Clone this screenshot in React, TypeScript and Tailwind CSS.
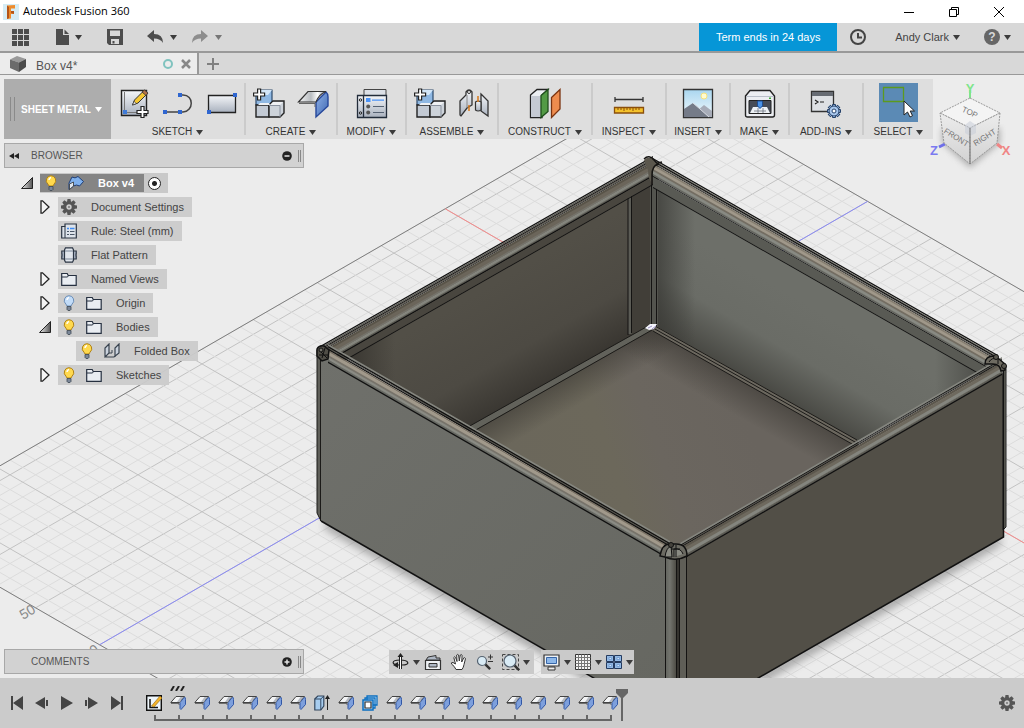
import { ReactNode } from "react";

type IconProps = { className?: string };

const Caret = ({ className = "fill-[#3c3c3c]" }: IconProps) => (
  <svg viewBox="0 0 7 5" className={`h-[5px] w-[7px] shrink-0 ${className}`} aria-hidden="true">
    <path d="M0 0h7L3.5 5z" />
  </svg>
);

const Svg = ({ children, box = 32, className = "size-8" }: { children: ReactNode; box?: number; className?: string }) => (
  <svg viewBox={`0 0 ${box} ${box}`} className={`shrink-0 ${className}`} fill="none" aria-hidden="true">
    {children}
  </svg>
);

const Gradients = () => (
  <svg className="absolute size-0" aria-hidden="true">
    <defs>
      <linearGradient id="steel" x1="0" y1="0" x2="0" y2="1">
        <stop offset="0" stopColor="#f4f6f9" />
        <stop offset="1" stopColor="#a9b1be" />
      </linearGradient>
      <linearGradient id="sky" x1="0" y1="0" x2="0" y2="1">
        <stop offset="0" stopColor="#a9d6ef" />
        <stop offset="1" stopColor="#f3fafd" />
      </linearGradient>
      <linearGradient id="fold" x1="0" y1="0" x2="1" y2="0">
        <stop offset="0" stopColor="#f5f5f5" />
        <stop offset=".45" stopColor="#b9bdc1" />
        <stop offset=".7" stopColor="#fff" />
        <stop offset="1" stopColor="#8b94a4" />
      </linearGradient>
      <linearGradient id="foldBlue" x1="0" y1="0" x2="1" y2="1">
        <stop offset="0" stopColor="#8fb2e8" />
        <stop offset="1" stopColor="#4068b2" />
      </linearGradient>
      <linearGradient id="tri" x1="0" y1="0" x2="1" y2="0">
        <stop offset="0" stopColor="#eee" />
        <stop offset="1" stopColor="#555" />
      </linearGradient>
    </defs>
  </svg>
);

/* ---------- ribbon icons ---------- */

const Plus3d = ({ x, y }: { x: number; y: number }) => (
  <path
    transform={`translate(${x} ${y})`}
    d="M4 0h3v4h4v3H7v4H4V7H0V4h4z"
    fill="#fff"
    stroke="#222"
    strokeWidth="1.2"
  />
);

const CreateSketchIcon = () => (
  <Svg>
    <path d="M3.5 3.5h25v25h-25z" fill="url(#steel)" stroke="#222" strokeWidth="1.4" />
    <path d="M6.5 5v20.5H20" stroke="#777" />
    <path d="M5 23h4v4H5z" fill="#3f7bd8" />
    <path d="M14.5 18l2-5L26 3.5l3.5 3-9.5 9.5z" fill="#f6c834" stroke="#333" />
    <path d="M24 5l2.5-2 3.5 3-2 2.5z" fill="#b2724a" stroke="#333" strokeWidth=".8" />
    <path d="M14.5 18l1.6-3.6 2.2 2.2z" fill="#fff" stroke="#333" strokeWidth=".7" />
    <Plus3d x={19} y={19.5} />
  </Svg>
);

const LineIcon = () => (
  <Svg>
    <path d="M3 25h18c11-1 11-17 0-17h-3" stroke="#444" strokeWidth="1.5" />
    <path d="M1 23h4v4H1zM16 23h4v4h-4zM16 6h4v4h-4z" fill="#2f66d0" />
  </Svg>
);

const RectangleIcon = () => (
  <Svg>
    <path d="M2.5 8.5h27v17h-27z" fill="url(#steel)" stroke="#222" strokeWidth="1.3" />
    <path d="M27 6h4v4h-4zM1 23h4v4H1z" fill="#2f66d0" />
  </Svg>
);

const NewComponentIcon = () => (
  <Svg>
    <path d="M3 8l4-5h12v12l-3 3H3z" fill="#8fb8e3" stroke="#2e4a6b" strokeWidth="1.2" />
    <path d="M7 3h12l-4 5H5z" fill="#d3e6f8" />
    <path d="M3 18h13v12H3z" fill="#c3cad4" stroke="#222" strokeWidth="1.4" />
    <path d="M16 18l4-4h11v12l-4 4H16z" fill="#cdd3da" stroke="#222" strokeWidth="1.4" />
    <path d="M17 18h10l3-3H20zM5 18l2-2h9l1 2z" fill="#eff1f4" />
    <path d="M16 18.5h11V30" stroke="#8b93a0" />
    <Plus3d x={0.6} y={2} />
  </Svg>
);

const FlangeIcon = () => (
  <Svg>
    <path d="M19 15L29 5q2 1.500 2 5v9L19 30z" fill="url(#foldBlue)" stroke="#26479a" strokeWidth="1.4" />
    <path d="M1.5 15L11 4.500h18q-7 2.500-10 10.500z" fill="url(#fold)" stroke="#333" strokeWidth="1.2" />
    <path d="M2 16.500h16V20" stroke="#666" />
  </Svg>
);

const ModifyIcon = () => (
  <Svg>
    <path d="M8 2.500h22V10H8z" fill="#dce0e6" stroke="#444" />
    <path d="M1.5 8.500h6v22h-6zM7.500 8.500h23v22h-23z" fill="url(#steel)" stroke="#222c3a" strokeWidth="1.3" />
    <circle cx="4.5" cy="13" r="1.2" stroke="#222" />
    <circle cx="4.5" cy="26" r="1.2" stroke="#222" />
    <path d="M10 11h4.500v4H10zM16 12.500h12v1.200H16z" fill="#4b93f7" />
    <circle cx="12.2" cy="19.5" r="2" fill="#555" />
    <circle cx="12.2" cy="25.5" r="2" fill="#555" />
    <path d="M17 19.500h11M17 25.500h11" stroke="#566273" strokeWidth="1.2" />
  </Svg>
);

const JointIcon = () => (
  <Svg>
    <path d="M2 14l6-6V5q3-4 6 0v13l-5 3-6 8q-1-.5-1-1.500z" fill="url(#steel)" stroke="#333" strokeWidth="1.3" />
    <path d="M9 8v13" stroke="#888" />
    <circle cx="11" cy="5" r="1.5" fill="#fff" stroke="#333" />
    <path d="M23 7l7 7v15l-7-5z" fill="url(#steel)" stroke="#333" strokeWidth="1.3" />
    <path d="M17.500 15q2.500-2 5.500 0v8q-3 2-5.500 0z" fill="url(#steel)" stroke="#333" strokeWidth="1.2" />
    <path d="M11 18v6M20 9v6" stroke="#d87a1d" strokeWidth="1.5" />
  </Svg>
);

const ConstructIcon = () => (
  <Svg>
    <path d="M1.5 8L8 2.500h11L13 8v22.500H1.5z" fill="#eceff3" stroke="#222" strokeWidth="1.3" />
    <path d="M2 9h10v21H2z" fill="#c5cad3" />
    <path d="M12 8.500l7-6v22l-7 6z" fill="#529a45" stroke="#1f4f1c" strokeWidth="1.3" />
    <path d="M22.500 10.500l8.500-8V22l-8.500 8.500z" fill="#ee8c4e" stroke="#7b3410" strokeWidth="1.3" />
  </Svg>
);

const InspectIcon = () => (
  <Svg>
    <path d="M2 10v5M30 10v5M2 12.500h28" stroke="#333" strokeWidth="1.3" />
    <path d="M1.500 20.500h29V26h-29z" fill="#f4c22c" stroke="#8b4f0c" strokeWidth="1.3" />
    <path d="M5 21v2M8 21v2M11 21v3M14 21v2M17 21v2M20 21v3M23 21v2M26 21v2" stroke="#8b4f0c" />
  </Svg>
);

const InsertIcon = () => (
  <Svg>
    <path d="M1.500 2.500h29v28h-29z" fill="url(#sky)" stroke="#333" strokeWidth="1.3" />
    <circle cx="22" cy="9" r="3" fill="#fffbd0" stroke="#f6e27a" />
    <path d="M15 24l7-6 8 6v6H15z" fill="#a7acb8" />
    <path d="M2 22l9-6 7 6 9 8H2z" fill="#757b88" />
    <path d="M11 16l7 6 9 8" stroke="#d8dbe2" />
  </Svg>
);

const MakeIcon = () => (
  <Svg>
    <path d="M1.500 9L6 3.500h20L30.500 9v19q0 2-2 2h-25q-2 0-2-2z" fill="#eceef2" stroke="#222" strokeWidth="1.4" />
    <path d="M2 9.500h28" stroke="#b9bfc9" />
    <path d="M5 13.500h22v13H5z" fill="#464c57" stroke="#222" />
    <path d="M9 20h14l3 6H6z" fill="#eef2f6" />
    <path d="M13.500 14h5v5L16 21.500 13.500 19z" fill="#4b93e7" stroke="#1f4e91" />
    <path d="M10 24h12M14 21v5M19 21v5" stroke="#6b727e" strokeWidth=".8" />
    <path d="M25 10.500h2V12h-2z" fill="#3aaa35" />
  </Svg>
);

const gearTeeth = [0, 45, 90, 135, 180, 225, 270, 315];

const AddInsIcon = () => (
  <Svg>
    <path d="M1.500 4.500h22v20h-22z" fill="#dde0e4" stroke="#333" strokeWidth="1.3" />
    <path d="M2 5h21v4H2z" fill="#666b73" />
    <path d="M5 13l3 2-3 2M10 15h4" stroke="#222" strokeWidth="1.2" />
    <g fill="#a9c8ee" stroke="#27436b">
      {gearTeeth.map((a) => (
        <path key={a} d="M22.500 17.500h3v3h-3z" transform={`rotate(${a} 24 24)`} />
      ))}
      <circle cx="24" cy="24" r="5" />
      <circle cx="24" cy="24" r="2" fill="#fff" />
    </g>
  </Svg>
);

const SelectIcon = () => (
  <Svg className="size-[39px]" box={39}>
    <path d="M4.500 4.500h20v14h-20z" stroke="#5c9a1e" strokeWidth="1.3" />
    <path d="M25 18v14l3.500-3 2.500 5 2.500-1.300-2.300-4.700h4.300z" fill="#fff" stroke="#222" />
  </Svg>
);

/* ---------- browser icons ---------- */

const Bulb = ({ off = false }: { off?: boolean }) => (
  <Svg box={16} className="size-4">
    <path
      d="M8 .7a4.800 4.800 0 0 1 3 8.500L10 11H6L5 9.200A4.800 4.800 0 0 1 8 .7z"
      fill={off ? "#c2dcf8" : "#ffd94e"}
      stroke={off ? "#6d8fb8" : "#b08318"}
    />
    <path d="M6 5q0-2 2-2.500" stroke="#fff" strokeWidth="1.5" />
    <path d="M6 11.500h4v3l-1 1H7l-1-1z" fill="#7b8798" stroke="#3e4753" strokeWidth=".8" />
  </Svg>
);

const Folder = () => (
  <Svg box={16} className="size-4">
    <path d="M.7 14.300V2.500h5.500l1 2h8v9.800z" fill="#e9edf2" stroke="#263040" strokeWidth="1.2" />
    <path d="M1 6h5.500l1-1.500" stroke="#263040" />
  </Svg>
);

const Gear = ({ className = "size-4" }: IconProps) => (
  <Svg box={16} className={className}>
    {gearTeeth.map((a) => (
      <path key={a} d="M6.500 0h3l.5 3H6z" fill="#555" transform={`rotate(${a} 8 8)`} />
    ))}
    <circle cx="8" cy="8" r="4.2" stroke="#555" strokeWidth="3" />
    <circle cx="8" cy="8" r="1" fill="#777" />
  </Svg>
);

const RuleIcon = () => (
  <Svg box={16} className="size-4">
    <path d="M4 1h11.300v14H.7V3.500H4z" fill="#dde3ea" stroke="#2b3543" strokeWidth="1.2" />
    <path d="M4 3.500V15" stroke="#2b3543" />
    <path d="M6 5.500h2M9 5.500h4.500" stroke="#3f8cf4" strokeWidth="1.4" />
    <path d="M6 8.500h2M9 8.500h4.500M6 11.500h2M9 11.500h4.500" stroke="#4a5666" strokeWidth="1.2" />
  </Svg>
);

const FlatPatternIcon = () => (
  <Svg box={16} className="size-4">
    <path d="M.8 4h14.400v3H15v2h.2v3H.8V9H1V7H.8z" fill="#aeb9c9" stroke="#2b3543" strokeWidth="1.2" />
    <path d="M4.500.8h7l1 2.200v10l-1 2.200h-7L3.500 13V3z" fill="#e1e6ec" stroke="#2b3543" strokeWidth="1.2" />
    <path d="M4 4h8M4 12h8" stroke="#7b8798" />
  </Svg>
);

const SheetIcon = () => (
  <Svg box={16} className="size-4">
    <path d="M1 14.500V8l3-6q3 2 6-.5l5.500 5-4 4.500q-3-2-6 0z" fill="#7fb0ec" stroke="#1f3f78" />
    <path d="M1.500 14.500V9L5.500 7v4z" fill="#dfe6ee" stroke="#333" strokeWidth=".8" />
  </Svg>
);

const FoldedIcon = () => (
  <Svg box={16} className="size-4">
    <path d="M1 14V5l4-4v9l-4 4h9l5-4V1l-4 4v9" fill="#cbd3de" stroke="#39434f" strokeWidth="1.2" />
    <path d="M5 10h3V7" stroke="#39434f" />
  </Svg>
);

/* ---------- 3d view ---------- */

const CX = 650;
const CY = 327;
const DX = 12.8;
const DY = 7.39;

const gridPoint = (a: number, b: number) => [CX + (a + b) * DX, CY + (a - b) * DY];

const range = (from: number, to: number) => Array.from({ length: to - from + 1 }, (_, i) => from + i);

function gridLine(a1: number, b1: number, a2: number, b2: number) {
  const [x1, y1] = gridPoint(a1, b1);
  const [x2, y2] = gridPoint(a2, b2);
  return { x1, y1, x2, y2 };
}

type Band = [top: number, bottom: number, color: string];

// a rail is a stack of strips that run parallel to one edge of the box
function Rail({ from, to, bands }: { from: [number, number]; to: [number, number]; bands: Band[] }) {
  return (
    <g>
      {bands.map(([t, b, color]) => (
        <path
          key={t}
          d={`M${from[0]} ${from[1] + t}L${to[0]} ${to[1] + t}V${to[1] + b}L${from[0]} ${from[1] + b}z`}
          fill={color}
        />
      ))}
    </g>
  );
}

const rearLeft: Band[] = [
  [0, 1.5, "#111"],
  [1.5, 3, "#5e5d56"],
  [3, 4.5, "#111"],
  [4, 5.5, "#5e5a52"],
  [5.5, 6.5, "#1d1c1a"],
  [6.5, 10, "#595449"],
  [9, 14, "#6b655a"],
  [13, 15.5, "#74726a"],
  [15, 18, "#83847c"],
  [17.5, 19.5, "#5b5a53"],
  [19, 20.5, "#111"],
  [20.5, 28, "#49463f"],
  [28, 29, "#111"],
];

const rearRight: Band[] = [
  [0, 1.5, "#111"],
  [1.5, 3, "#77766e"],
  [2.5, 4, "#111"],
  [4, 5, "#605e57"],
  [5, 6, "#1d1c1a"],
  [6, 9, "#857e71"],
  [8, 12, "#a0988a"],
  [11, 14, "#736d62"],
  [13, 16.5, "#888a83"],
  [16, 18, "#64655f"],
  [18, 19, "#111"],
  [19, 29, "#595a54"],
  [29, 30, "#111"],
];

const frontLeft: Band[] = [
  [0, 2, "#85867f"],
  [2, 3.5, "#111"],
  [3.5, 4.5, "#55544e"],
  [4.5, 6, "#111"],
  [6, 8, "#776f63"],
  [7.5, 12, "#a1998b"],
  [11, 14, "#77736a"],
  [13, 16, "#8a8b84"],
  [15.5, 18, "#666862"],
  [17.5, 19, "#111"],
];

const frontRight: Band[] = [
  [0, 2, "#85867f"],
  [2, 3, "#111"],
  [3, 4, "#55544e"],
  [4, 5, "#111"],
  [5, 8, "#5c574d"],
  [7.5, 12, "#6e695e"],
  [11, 15, "#84857e"],
  [14.5, 17, "#5c5b54"],
  [16.5, 18, "#111"],
];

const LEFT_WALL = "M340 352L652 176V332L470 432z";
const RIGHT_WALL = "M654 178L990 368L856 442L654 326z";
const FLOOR = "M470 430L651 328L858 441L858 448L680 560L660 545z";

function Viewport() {
  return (
    <svg
      viewBox="0 75 1024 603"
      preserveAspectRatio="xMidYMid slice"
      className="absolute inset-0 size-full"
      role="img"
      aria-label="Folded sheet metal box"
    >
      <defs>
        <linearGradient id="leftWall" gradientUnits="userSpaceOnUse" x1="500" y1="280" x2="558" y2="381">
          <stop offset="0" stopColor="#524f47" />
          <stop offset=".6" stopColor="#4d4a43" />
          <stop offset="1" stopColor="#383530" />
        </linearGradient>
        <linearGradient id="leftShade" gradientUnits="userSpaceOnUse" x1="352" y1="0" x2="395" y2="0">
          <stop offset="0" stopColor="#2b2925" stopOpacity=".6" />
          <stop offset="1" stopColor="#2b2925" stopOpacity="0" />
        </linearGradient>
        <linearGradient id="rightWall" gradientUnits="userSpaceOnUse" x1="800" y1="300" x2="750" y2="386">
          <stop offset="0" stopColor="#6d6f69" />
          <stop offset=".5" stopColor="#6a6c66" />
          <stop offset="1" stopColor="#454540" />
        </linearGradient>
        <linearGradient id="rightShade" gradientUnits="userSpaceOnUse" x1="657" y1="0" x2="695" y2="0">
          <stop offset="0" stopColor="#3a3a36" stopOpacity=".75" />
          <stop offset="1" stopColor="#3a3a36" stopOpacity="0" />
        </linearGradient>
        <linearGradient id="rightEndShade" gradientUnits="userSpaceOnUse" x1="935" y1="0" x2="985" y2="0">
          <stop offset="0" stopColor="#33332f" stopOpacity="0" />
          <stop offset="1" stopColor="#33332f" stopOpacity=".6" />
        </linearGradient>
        <linearGradient id="floor" gradientUnits="userSpaceOnUse" x1="520" y1="480" x2="740" y2="400">
          <stop offset="0" stopColor="#6b675b" />
          <stop offset=".4" stopColor="#6c685b" />
          <stop offset=".6" stopColor="#6b665f" />
          <stop offset="1" stopColor="#69645e" />
        </linearGradient>
        <linearGradient id="floorLeft" gradientUnits="userSpaceOnUse" x1="560" y1="381" x2="575" y2="407">
          <stop offset="0" stopColor="#3a3732" stopOpacity=".55" />
          <stop offset="1" stopColor="#3a3732" stopOpacity="0" />
        </linearGradient>
        <linearGradient id="floorRight" gradientUnits="userSpaceOnUse" x1="750" y1="384" x2="733" y2="414">
          <stop offset="0" stopColor="#3a3732" stopOpacity=".6" />
          <stop offset="1" stopColor="#3a3732" stopOpacity="0" />
        </linearGradient>
        <linearGradient id="frontWall" x1="0" y1="0" x2="1" y2="1">
          <stop offset="0" stopColor="#6f706b" />
          <stop offset="1" stopColor="#666761" />
        </linearGradient>
        <linearGradient id="corner" x1="0" y1="0" x2="1" y2="0">
          <stop offset="0" stopColor="#60625c" />
          <stop offset=".4" stopColor="#73746e" />
          <stop offset="1" stopColor="#48463f" />
        </linearGradient>
        <filter id="soft">
          <feGaussianBlur stdDeviation="5" />
        </filter>
      </defs>

      <rect x="0" y="75" width="1024" height="603" fill="#ececec" />

      <g stroke="#dcdcdc">
        {range(-16, 45).map((a) => (
          <line key={a} {...gridLine(a, -43, a, 17)} stroke={a % 5 === 0 ? "#c2c2c2" : undefined} />
        ))}
        {range(-43, 17).map((b) => (
          <line key={b} {...gridLine(-16, b, 45, b)} stroke={b % 5 === 0 ? "#c2c2c2" : undefined} />
        ))}
      </g>
      <g stroke="#7d7d7d">
        <line {...gridLine(-16, -43, -16, 17)} />
        <line {...gridLine(-16, 17, 45, 17)} />
        <line {...gridLine(-16, -43, 45, -43)} />
      </g>
      <line {...gridLine(-16, 0, 45, 0)} stroke="#f78b8b" />
      <line {...gridLine(0, -43, 0, 17)} stroke="#8a8af5" />
      <text x="23" y="620" transform="rotate(-30 23 620)" fontSize="14" fill="#888" fontFamily="Liberation Sans, sans-serif">
        50
      </text>
      <text x="93" y="656" transform="rotate(-30 93 656)" fontSize="14" fill="#888" fontFamily="Liberation Sans, sans-serif">
        0
      </text>

      <path d="M326 524L592 678M1000 540L758 680" stroke="#555" strokeWidth="8" opacity=".6" filter="url(#soft)" />

      {/* inside faces */}
      <path d={LEFT_WALL} fill="url(#leftWall)" />
      <path d={LEFT_WALL} fill="url(#leftShade)" />
      <path d="M631 196L652 184V326L631 336z" fill="#413e38" />
      <path d="M628 196h3.500v138H628z" fill="#5b5b55" />
      <path d="M628 196V335M631.500 194V333" stroke="#141312" />
      <path d={RIGHT_WALL} fill="url(#rightWall)" />
      <path d={RIGHT_WALL} fill="url(#rightShade)" />
      <path d={RIGHT_WALL} fill="url(#rightEndShade)" />
      <path d="M650 165h8v165h-8z" fill="#53544e" />
      <path d="M651.500 176V328M656.500 180V328" stroke="#141312" />

      <path d={FLOOR} fill="url(#floor)" />
      <path d={FLOOR} fill="url(#floorLeft)" />
      <path d={FLOOR} fill="url(#floorRight)" />
      <path d="M468 427L648 326L652 330L475 430z" fill="#62625b" />
      <path d="M656 326L857 440L852 444L653 331z" fill="#6b675e" />
      <path
        d="M468 427L648 326M474 431L652 330M655 326L857 440M654 328.500L855 442M653 331L852 444"
        stroke="#1b1a18"
      />
      <path d="M645 328l5-4h7l-3 5-5 1z" fill="#f4f4fa" />
      <path d="M648 328l4-2M652 329l4-3" stroke="#9a90c4" />

      {/* rear rails */}
      <Rail from={[320, 346]} to={[653, 156]} bands={rearLeft} />
      <Rail from={[653, 158]} to={[998, 355]} bands={rearRight} />
      <path d="M644 160q5-5 10 1l3 3q-5 2-5 11v8q-4-4-4-13z" fill="#5b574d" />
      <path d="M644 159q5-5 10 1l4 4q-6 2-6 11v10M658 163l4-1" stroke="#161513" strokeWidth="1.5" fill="none" />

      {/* outside faces */}
      <path d="M317 350L321 354V521L317 513z" fill="#5f5f59" stroke="#1b1a18" />
      <path d="M321 356L666 556V700H633L321 521z" fill="url(#frontWall)" />
      <path d="M320.500 356V521" stroke="#1b1a18" />
      <path d="M321 521L632 700" stroke="#111" strokeWidth="1.5" />
      <path d="M687 556L1003 373V537L720 700H687z" fill="#524f47" />
      <path d="M1003 366h3v161l-3 3z" fill="#696860" stroke="#222" />
      <path d="M1003.500 370V537L720 700" stroke="#111" strokeWidth="1.5" fill="none" />

      <Rail from={[328, 344]} to={[670, 541]} bands={frontLeft} />
      <Rail from={[680, 543]} to={[1002, 357]} bands={frontRight} />

      {/* front corner */}
      <path d="M665 556h12v122h-12z" fill="url(#corner)" />
      <path d="M677 556h3v122h-3z" fill="#35332f" />
      <path d="M680 556h7v122h-7z" fill="#5f5e57" />
      <path d="M665.500 555V678M676.500 558V678M679.500 558V678M686.500 553V678" stroke="#141312" />
      <path d="M660 556q2-13 11-12h5q11 0 11 12-11 6-22 1z" fill="#6b6a62" stroke="#111" strokeWidth="1.5" />
      <path d="M665 557q1-9 6-11l1 11zM674 557v-8q7-1 9 5M676 545v12M671 549h9" fill="#8a8b83" stroke="#111" />
      <circle cx="671" cy="545" r="2.5" fill="#44423c" stroke="#111" />

      {/* left and right corners */}
      <path d="M317 349q2-4 7-3l5 4-1 9-6 2-5-5z" fill="#504e47" stroke="#111" strokeWidth="1.5" />
      <path d="M319 350l8 8M325 348l-3 10M319 355h9" stroke="#111" />
      <circle cx="321" cy="350" r="2" fill="#76756d" stroke="#111" />
      <path d="M985 364q0-8 9-8l5 3 6 5v6l-4 1q-1-8-10-7z" fill="#6e6b61" stroke="#111" strokeWidth="1.5" />
      <path d="M989 362q3-5 8-3M998 358v6" stroke="#111" fill="none" />
      <circle cx="996" cy="357" r="2.5" fill="#5a5850" stroke="#111" />
      <circle cx="1004" cy="366" r="2.5" fill="#5a5850" stroke="#111" />
    </svg>
  );
}

function ViewCube() {
  return (
    <svg viewBox="0 0 94 98" className="absolute top-[3px] right-0 h-[98px] w-[94px]" role="img" aria-label="View cube">
      <defs>
        <linearGradient id="cubeFace" x1="0" y1="0" x2="0" y2="1">
          <stop offset="0" stopColor="#ececec" />
          <stop offset="1" stopColor="#d2d2d2" />
        </linearGradient>
        <filter id="cubeShadow">
          <feGaussianBlur stdDeviation="3" />
        </filter>
      </defs>
      <path d="M12 65L40 90L70 65V50H12z" fill="#888" opacity=".6" filter="url(#cubeShadow)" />
      <path d="M40 12v9" stroke="#7fe58b" strokeWidth="2" />
      <path d="M9 69l6-3" stroke="#6f6fe8" strokeWidth="3" />
      <path d="M67 66l5 4" stroke="#f08585" strokeWidth="3" />
      <path d="M40 20L70 35L40 50L10 35z" fill="#f4f4f4" stroke="#999" strokeDasharray="2 1" />
      <path d="M10 35L40 50V86L14 65z" fill="url(#cubeFace)" stroke="#999" strokeDasharray="2 1" />
      <path d="M70 35L40 50V86L67 65z" fill="url(#cubeFace)" stroke="#999" strokeDasharray="2 1" />
      <path d="M35 47l5-4 6 4v8l-6 3-5-3z" fill="#c9ced8" opacity=".6" />
      <path d="M40 50V86" stroke="#777" />
      <g fontFamily="Liberation Sans, sans-serif" fill="#777" textAnchor="middle">
        <text x="40" y="37" fontSize="8" transform="rotate(25 40 34)">TOP</text>
        <text x="26" y="62" fontSize="8" transform="rotate(32 26 60)">FRONT</text>
        <text x="55" y="62" fontSize="8" transform="rotate(-32 55 60)">RIGHT</text>
        <g fontWeight="bold" fontSize="13">
          <text x="40" y="15" fill="#7fe58b">Y</text>
          <text x="4" y="77" fill="#7a7af0">Z</text>
          <text x="76" y="77" fill="#f08585">X</text>
        </g>
      </g>
    </svg>
  );
}

/* ---------- chrome ---------- */

const FusionLogo = () => (
  <Svg box={16} className="size-4">
    <path d="M0 0h16v16H0z" fill="#d5ecf5" />
    <path d="M4 1.500l8-.5v3.500H8V7h3v3H8v4.500L4 15z" fill="#ee8b2d" />
    <path d="M4 1.500L6 3v11l-2 1zM8 7h3v3L8 9z" fill="#b4551a" />
  </Svg>
);

function TitleBar() {
  return (
    <header className="flex h-[23px] items-center bg-white px-[3px]">
      <FusionLogo />
      <h1 className="ml-1 font-['Open_Sans',sans-serif] text-[11px] text-black">Autodesk Fusion 360</h1>
      <div className="ml-auto flex">
        <button aria-label="Minimize" className="flex h-5 w-[45px] items-center justify-center">
          <Svg box={12} className="size-3"><path d="M1 6.500h10" stroke="#000" /></Svg>
        </button>
        <button aria-label="Restore" className="flex h-5 w-[45px] items-center justify-center">
          <Svg box={12} className="size-3"><path d="M1.500 3.500h7v7h-7zM3.500 3.500v-2h7v7h-2" stroke="#000" /></Svg>
        </button>
        <button aria-label="Close" className="flex h-5 w-[45px] items-center justify-center">
          <Svg box={12} className="size-3"><path d="M1 1l10 10M11 1L1 11" stroke="#000" /></Svg>
        </button>
      </div>
    </header>
  );
}

function AppBar() {
  return (
    <div className="flex h-[30px] items-center border-b-2 border-[#999] bg-[#d8d8d8] pl-3 pr-[13px]">
      <button aria-label="Data panel">
        <Svg box={18} className="size-[18px]">
          <path
            d="M0 1h5v5H0zM6 1h5v5H6zM12 1h5v5h-5zM0 7h5v5H0zM6 7h5v5H6zM12 7h5v5h-5zM0 13h5v5H0zM6 13h5v5H6zM12 13h5v5h-5z"
            fill="#4d4d4d"
          />
        </Svg>
      </button>
      <button aria-label="File" className="ml-[25px] flex items-center gap-1">
        <Svg box={16} className="size-4">
          <path d="M1 0h7v6h6v10H1z" fill="#4d4d4d" />
          <path d="M9.500.5L14 5H9.500z" fill="#4d4d4d" />
        </Svg>
        <Caret />
      </button>
      <button aria-label="Save" className="ml-[25px]">
        <Svg box={16} className="size-4">
          <path d="M0 0h16v16H2l-2-2z" fill="#4d4d4d" />
          <path d="M3 1.500h10V7H3zM4 10h8v5H4z" fill="#d8d8d8" />
          <path d="M5.500 12h2v2.500h-2z" fill="#4d4d4d" />
        </Svg>
      </button>
      <button aria-label="Undo" className="ml-6 flex items-center gap-[7px]">
        <Svg box={16} className="size-4">
          <path d="M0 7l7-6v4q9 0 9 9-2.500-4.500-9-4.500V13z" fill="#4d4d4d" />
        </Svg>
        <Caret />
      </button>
      <button aria-label="Redo" className="ml-[15px] flex items-center gap-[7px]">
        <Svg box={16} className="size-4">
          <path d="M16 7L9 1v4q-9 0-9 9 2.500-4.500 9-4.500V13z" fill="#8d8d8d" />
        </Svg>
        <Caret className="fill-[#777]" />
      </button>
      <button className="ml-auto h-7 w-[138px] bg-[#0696d7] text-[11px] text-white">
        Term ends in 24 days
      </button>
      <button aria-label="Job status" className="ml-3">
        <Svg box={18} className="size-[18px]">
          <circle cx="9" cy="9" r="7" stroke="#444" strokeWidth="2" />
          <path d="M9 5v4.500h4" stroke="#444" strokeWidth="2" />
        </Svg>
      </button>
      <button className="ml-7 flex items-center gap-1 text-[11px] text-[#444]">
        Andy Clark
        <Caret />
      </button>
      <button aria-label="Help" className="ml-6 flex items-center gap-1">
        <span className="flex size-4 items-center justify-center rounded-full bg-[#666] text-xs font-bold text-[#d8d8d8]">?</span>
        <Caret />
      </button>
    </div>
  );
}

function TabBar() {
  return (
    <div className="flex h-[22px] items-stretch border-b border-[#999] bg-[#d8d8d8]">
      <div className="flex w-[199px] items-center border-r-2 border-[#999] bg-[#ececec] pl-[10px] pr-[5px]">
        <Svg box={16} className="size-4">
          <path d="M0 3.500L7 0l9 3-7 3.500z" fill="#999" />
          <path d="M0 3.500l9 3V16l-9-4z" fill="#6b6b6b" />
          <path d="M16 3L9 6.500V16l7-5z" fill="#4b4b4b" />
        </Svg>
        <span className="ml-[10px] pt-1 text-xs text-[#555]">Box v4*</span>
        <span className="ml-auto size-[10px] rounded-full border-2 border-[#80c3bf]" />
        <button aria-label="Close tab" className="ml-[7px]">
          <Svg box={12} className="size-3"><path d="M2 2l8 8M10 2l-8 8" stroke="#888" strokeWidth="2.5" /></Svg>
        </button>
      </div>
      <button aria-label="New tab" className="ml-2 flex items-center">
        <Svg box={12} className="size-3"><path d="M6 0v12M0 6h12" stroke="#808080" strokeWidth="2" /></Svg>
      </button>
    </div>
  );
}

const groups: { label: string; width: string; icons: ReactNode[] }[] = [
  { label: "SKETCH", width: "w-[135px]", icons: [<CreateSketchIcon />, <LineIcon />, <RectangleIcon />] },
  { label: "CREATE", width: "w-[92px]", icons: [<NewComponentIcon />, <FlangeIcon />] },
  { label: "MODIFY", width: "w-[69px]", icons: [<ModifyIcon />] },
  { label: "ASSEMBLE", width: "w-[92px]", icons: [<NewComponentIcon />, <JointIcon />] },
  { label: "CONSTRUCT", width: "w-[94px]", icons: [<ConstructIcon />] },
  { label: "INSPECT", width: "w-[74px]", icons: [<InspectIcon />] },
  { label: "INSERT", width: "w-[64px]", icons: [<InsertIcon />] },
  { label: "MAKE", width: "w-[59px]", icons: [<MakeIcon />] },
  { label: "ADD-INS", width: "w-[74px]", icons: [<AddInsIcon />] },
];

const GroupLabel = ({ children }: { children: string }) => (
  <button className="mt-auto flex items-center gap-1 text-[10px] leading-3 text-[#333]">
    {children}
    <Caret />
  </button>
);

function Toolbar() {
  return (
    <nav className="relative mt-1 ml-1 flex h-[60px] w-fit bg-[#dedede]">
      <button className="flex w-[107px] items-center bg-[#adadad] pl-[6px] text-[10px] font-bold text-white">
        <span className="h-6 w-[5px] border-x border-[#8a8a8a]" />
        <span className="ml-[6px] mr-1">SHEET METAL</span>
        <Caret className="fill-white" />
      </button>
      {groups.map((g) => (
        <div key={g.label} className={`flex ${g.width}`}>
          <div className="flex flex-1 flex-col items-center pt-1 pb-px">
            <div className="flex h-10 items-center gap-3">
              {g.icons.map((icon, i) => (
                <button key={i} aria-label={`${g.label} ${i + 1}`}>{icon}</button>
              ))}
            </div>
            <GroupLabel>{g.label}</GroupLabel>
          </div>
          <span className="my-1 w-[2px] bg-[#cbcbcb]" />
        </div>
      ))}
      <div className="flex w-[69px] flex-col items-center pt-1 pb-px">
        <button aria-label="Select" className="block bg-[#5b8ab5]"><SelectIcon /></button>
        <GroupLabel>SELECT</GroupLabel>
      </div>
    </nav>
  );
}

function PanelHeader({ title, collapse = false }: { title: string; collapse?: boolean }) {
  return (
    <div className="flex h-[25px] w-[300px] items-center border border-[#a8a8a8] bg-[#d2d2d2] pr-[2px] text-[10px] text-[#555]">
      <span className="flex w-[26px] pl-1">
        {collapse && (
          <button aria-label="Collapse browser">
            <Svg box={10} className="size-[10px]"><path d="M5 2v6L0 5zM10 2v6L5 5z" fill="#222" /></Svg>
          </button>
        )}
      </span>
      {title}
      <button aria-label={`${title} options`} className="ml-auto">
        <Svg box={10} className="size-[10px]">
          <circle cx="5" cy="5" r="4.8" fill="#222" />
          <path d={collapse ? "M2.500 5h5" : "M2.500 5h5M5 2.500v5"} stroke="#e4e4e4" strokeWidth="1.5" />
        </Svg>
      </button>
      <span className="ml-[6px] h-3 w-[3px] border-x border-[#888]" />
    </div>
  );
}

type Node = { label: string; indent: string; icons: ReactNode[]; arrow?: "open" | "closed" };

const nodes: Node[] = [
  { label: "Document Settings", indent: "pl-9", icons: [<Gear />], arrow: "closed" },
  { label: "Rule: Steel (mm)", indent: "pl-9", icons: [<RuleIcon />] },
  { label: "Flat Pattern", indent: "pl-9", icons: [<FlatPatternIcon />] },
  { label: "Named Views", indent: "pl-9", icons: [<Folder />], arrow: "closed" },
  { label: "Origin", indent: "pl-9", icons: [<Bulb off />, <Folder />], arrow: "closed" },
  { label: "Bodies", indent: "pl-9", icons: [<Bulb />, <Folder />], arrow: "open" },
  { label: "Folded Box", indent: "pl-[54px]", icons: [<Bulb />, <FoldedIcon />] },
  { label: "Sketches", indent: "pl-9", icons: [<Bulb />, <Folder />], arrow: "closed" },
];

const Arrow = ({ state }: { state?: "open" | "closed" }) => (
  <span className="mr-1 flex w-[18px] justify-center">
    {state && (
      <button aria-label={state === "open" ? "Collapse" : "Expand"}>
        <Svg box={14} className="size-[14px]">
          {state === "open" ? (
            <path d="M12.500 1.500v11h-11z" fill="url(#tri)" stroke="#222" />
          ) : (
            <path d="M3 .8v12.400h1.500L11 7 4.500.8z" fill="#f4f4f4" stroke="#222" strokeWidth="1.3" />
          )}
        </Svg>
      </button>
    )}
  </span>
);

const IconSlots = ({ icons }: { icons: ReactNode[] }) => (
  <span className="mr-[11px] flex gap-[3px]">
    {icons.map((icon, i) => (
      <span key={i} className="flex w-[22px] justify-center">{icon}</span>
    ))}
  </span>
);

function Browser() {
  return (
    <section className="relative mt-1 ml-1">
      <PanelHeader title="BROWSER" collapse />
      <ul className="-ml-1 mt-[5px] flex flex-col gap-1 text-[11px] text-[#444]">
        <li className="flex h-5 items-center pl-[18px]">
          <Arrow state="open" />
          <div className="flex h-5 items-center bg-[#c9c9c9] pr-[7px]">
            <span className="flex h-[18px] items-center bg-[#858585] pr-[10px] font-bold text-white">
              <IconSlots icons={[<Bulb />, <SheetIcon />]} />
              Box v4
            </span>
            <input
              type="radio"
              name="active"
              aria-label="Activate Box v4"
              defaultChecked
              className="ml-1 size-[13px] appearance-none rounded-full border border-[#222] bg-white bg-[radial-gradient(#222_0_2px,transparent_3px)]"
            />
          </div>
        </li>
        {nodes.map((n) => (
          <li key={n.label} className={`flex h-5 items-center ${n.indent}`}>
            <Arrow state={n.arrow} />
            <div className="flex h-5 items-center bg-[#cbcbcb]/95 pr-2">
              <IconSlots icons={n.icons} />
              {n.label}
            </div>
          </li>
        ))}
      </ul>
    </section>
  );
}

/* ---------- navigation bar ---------- */

const NavButton = ({ label, width, caret, children }: { label: string; width: string; caret?: boolean; children: ReactNode }) => (
  <button aria-label={label} className={`flex h-6 items-center gap-[3px] ${width}`}>
    <Svg box={18} className="size-[18px]">{children}</Svg>
    {caret && <Caret />}
  </button>
);

const Lens = ({ cx, cy, r }: { cx: number; cy: number; r: number }) => (
  <>
    <path d={`M${cx + r * 0.7} ${cy + r * 0.7}l5 5`} stroke="#333" strokeWidth="2.5" />
    <circle cx={cx} cy={cy} r={r} fill="#d9ebf5" stroke="#556270" strokeWidth="1.2" />
  </>
);

function NavBar() {
  return (
    <div className="flex gap-[7px]">
      <div className="flex bg-[#cacaca] pl-[3px] pr-[2px]">
        <NavButton label="Orbit" width="w-[32px]" caret>
          <path d="M7 12C-1 12-1 7 8 7s11 5 2 5" stroke="#222" strokeWidth="1.2" />
          <path d="M8.500 2v14" stroke="#222" strokeWidth="3" />
          <path d="M8.500 3v13" stroke="#fff" />
          <path d="M8.500 0l3 4h-6z" fill="#222" />
          <path d="M1 12l5-3v6z" fill="#222" />
        </NavButton>
        <NavButton label="Look at" width="w-[26px]">
          <path d="M1.500 7.500h15v9h-15z" fill="#eef1f4" stroke="#333" strokeWidth="1.2" />
          <path d="M2 7l2-3 8-1.500V5h4v2zM5 10.500h8V14H5z" fill="#aeb7c4" stroke="#333" />
        </NavButton>
        <NavButton label="Pan" width="w-[26px]">
          <path
            d="M6 16.500Q4.500 13 1.500 11q-.5-1.800 1.500-1.500l2.500 1.500-1.700-6.500q.7-1.500 1.800 0L7 8.500 6.700 2q.8-1.200 1.900 0l.7 6 1-6q1-1 1.800.2L11.700 9l2-4q1.200-.8 1.800.5L14 11.500q-.5 3-2 5z"
            fill="#fff"
            stroke="#333"
          />
        </NavButton>
        <NavButton label="Zoom" width="w-[26px]">
          <Lens cx={6} cy={8} r={4.5} />
          <path d="M12 4h5M14.500 1.500v5M12 8.500h5" stroke="#333" />
        </NavButton>
        <NavButton label="Zoom window" width="w-[30px]" caret>
          <path d="M.5 1.500h16v15H.5z" stroke="#444" strokeDasharray="3 2" />
          <Lens cx={8} cy={8} r={6} />
        </NavButton>
      </div>
      <div className="flex bg-[#cacaca] pl-[2px] pr-px">
        <NavButton label="Display settings" width="w-[31px]" caret>
          <path d="M1 2h15v11H1z" fill="#eef1f4" stroke="#333" strokeWidth="1.2" />
          <path d="M3.500 4.500h10v6h-10z" fill="#8db8ea" stroke="#3766a8" />
          <path d="M5 14h7v3H5z" fill="#eee" stroke="#333" />
        </NavButton>
        <NavButton label="Grid and snaps" width="w-[31px]" caret>
          <path d="M1.500 1.500h15v15h-15z" fill="#f6f6f6" stroke="#333" />
          <path d="M4.500 1.500v15M7.500 1.500v15M10.500 1.500v15M13.500 1.500v15M1.500 4.500h15M1.500 7.500h15M1.500 10.500h15M1.500 13.500h15" stroke="#777" />
        </NavButton>
        <NavButton label="Viewports" width="w-[28px]" caret>
          <path d="M1.500 2.500h7v6h-7zM9.500 2.500h7v6h-7zM1.500 9.500h7v6h-7zM9.500 9.500h7v6h-7z" fill="#93b9e4" stroke="#243b60" />
          <path d="M4 4.500h2.500v2H4zM12 4.500h2.500v2H12zM4 11.500h2.500v2H4zM12 11.500h2.500v2H12z" fill="#cfe2f6" stroke="#6c98cf" strokeWidth=".8" />
        </NavButton>
      </div>
    </div>
  );
}

/* ---------- timeline ---------- */

const transport = [
  { label: "Go to start", d: "M2 2h2v14H2zM14 2v14L4 9z" },
  { label: "Step back", d: "M11 3v12L1 9zM12 6h2v6h-2z" },
  { label: "Play", d: "M2 2l12 7-12 7z" },
  { label: "Step forward", d: "M4 3v12l10-6zM1 6h2v6H1z" },
  { label: "Go to end", d: "M2 2v14l10-7zM12 2h2v14h-2z" },
];

const SketchFeature = () => (
  <Svg box={16} className="size-4">
    <path d="M.7.7h14.600v14.600H.7z" fill="#eef6fb" stroke="#111" strokeWidth="1.4" />
    <path d="M4 4v8.500h8" stroke="#111" strokeWidth="1.5" />
    <path d="M5.500 11L14 1l2 2-8 9z" fill="#f5b52a" stroke="#8c6210" strokeWidth=".6" />
  </Svg>
);

const ExtrudeFeature = () => (
  <Svg box={16} className="size-4">
    <path d="M.8 4l3-3h6v10l-3 4h-6z" fill="#a7cdf0" stroke="#33475f" strokeWidth="1.2" />
    <path d="M.8 4h6v11M6.800 4l3-3" stroke="#33475f" />
    <path d="M13.500 15V3" stroke="#222" />
    <path d="M13.500 0L16 4h-5z" fill="#222" />
  </Svg>
);

const CornerFeature = () => (
  <Svg box={16} className="size-4">
    <path d="M5 1h10v9H5zM3 3h10v10H3z" fill="#d3e9fa" stroke="#0c6fc0" strokeWidth="1.3" />
    <path d="M1 5h10v10H1z" fill="#b6dbf6" stroke="#0c6fc0" strokeWidth="1.5" />
    <path d="M3 7h6v6H3z" fill="#fff" stroke="#333" strokeWidth="1.2" />
  </Svg>
);

const FlangeFeature = () => (
  <Svg box={16} className="size-4">
    <path d="M10 7.500L14.500 2q1 .5 1 2.500v5L11 14.500l-1-1z" fill="#7d9fdc" stroke="#3358a6" />
    <path d="M.8 7.500L6 1.500h8.500Q11 3.500 9.500 7.500z" fill="#f4f5f6" stroke="#444" />
    <path d="M7 7l3.500-5H14q-3 2-4 5z" fill="#b4b9c1" />
    <path d="M1 8.500h8V10" stroke="#555" strokeWidth=".8" />
  </Svg>
);

const features = range(0, 19).map((i) => (i === 0 ? "Sketch" : i === 7 ? "Extrude" : i === 9 ? "Corner" : "Flange"));

function FeatureIcon({ kind }: { kind: string }) {
  if (kind === "Sketch") return <SketchFeature />;
  if (kind === "Extrude") return <ExtrudeFeature />;
  if (kind === "Corner") return <CornerFeature />;
  return <FlangeFeature />;
}

function Timeline() {
  return (
    <footer className="flex h-[50px] bg-[#cbcbcb] pl-[5px] pr-[9px]">
      <div className="flex items-center">
        {transport.map((t) => (
          <button key={t.label} aria-label={t.label} className="flex w-[25px] justify-center">
            <Svg box={18} className="size-[18px]"><path d={t.d} fill="#444" /></Svg>
          </button>
        ))}
      </div>
      <ol className="ml-3 flex pt-[17px]">
        {features.map((kind, i) => (
          <li key={i} className="relative flex w-6 flex-col items-center gap-1">
            {i === 1 && (
              <svg viewBox="0 0 16 5" className="absolute -top-[9px] h-[5px] w-4" aria-hidden="true">
                <path d="M1 5l3-5M6 5l3-5M11 5l3-5" stroke="#222" strokeWidth="2" />
              </svg>
            )}
            <button aria-label={`${kind} ${i + 1}`} className="block"><FeatureIcon kind={kind} /></button>
            <svg viewBox="0 0 24 6" className="h-[6px] w-6" aria-hidden="true">
              <path
                d={i === 0 ? "M13 0V5H24" : i === features.length - 1 ? "M0 5H13V0" : "M0 5H24M13 5V0"}
                stroke="#666"
                strokeWidth="2"
                fill="none"
              />
            </svg>
          </li>
        ))}
      </ol>
      <button aria-label="Timeline position" className="-ml-[6px] mt-[11px] self-start">
        <svg viewBox="0 0 12 32" className="h-8 w-3" aria-hidden="true">
          <path d="M0 0h12v4L7 9v23H5V9L0 4z" fill="#666" />
        </svg>
      </button>
      <button aria-label="Timeline settings" className="ml-auto"><Gear /></button>
    </footer>
  );
}

export default function App() {
  return (
    <div className="flex h-screen flex-col overflow-hidden bg-[#ececec] font-['Liberation_Sans',Arial,sans-serif]">
      <Gradients />
      <TitleBar />
      <AppBar />
      <TabBar />
      <main className="relative flex min-h-0 flex-1 flex-col">
        <Viewport />
        <ViewCube />
        <Toolbar />
        <Browser />
        <div className="relative mt-auto mb-1 flex items-end gap-[85px] pl-1">
          <PanelHeader title="COMMENTS" />
          <NavBar />
        </div>
      </main>
      <Timeline />
    </div>
  );
}
